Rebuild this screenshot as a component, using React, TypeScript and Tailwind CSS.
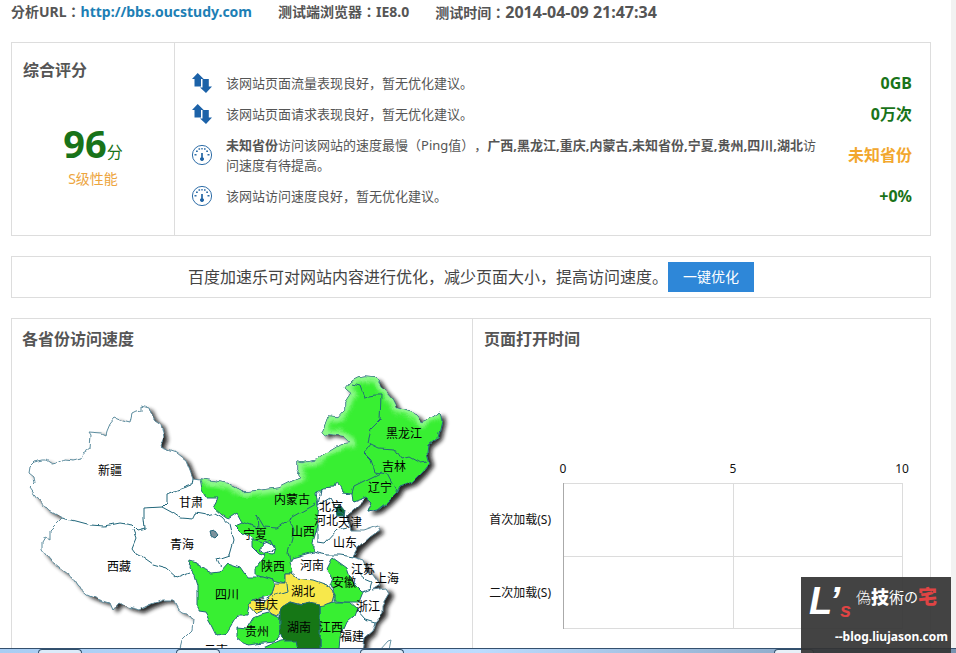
import React from "react";

const regions = {
  land: "30,488 35,483 34,476 29,472 30,466 34,462 43,460 46,460 52,464 57,463 64,459 73,460 82,458 84,453 90,449 91,435 89,432 102,433 106,435 107,431 110,424 115,418 122,421 130,423 132,414 136,412 142,411 142,406 149,408 151,414 155,420 161,424 164,437 160,447 168,450 177,453 186,460 190,470 193,478 200,479 215,481 230,484 243,492 263,490 278,488 288,483 302,477 297,470 297,462 302,463 317,460 327,452 340,444 350,443 342,435 330,433 325,436 322,433 328,417 338,418 345,410 345,402 351,393 345,388 350,382 358,378 365,377 377,378 383,388 392,398 397,408 407,411 417,415 422,422 433,417 440,412 442,420 438,437 428,445 427,453 430,463 423,472 413,482 400,487 397,493 387,503 378,510 368,512 372,502 367,497 353,510 346,515 350,523 352,530 363,530 377,525 380,530 370,537 358,548 353,557 363,560 367,570 373,575 380,585 372,590 387,588 390,593 383,605 383,613 375,622 372,632 365,638 362,660 180,660 180,648 182,640 192,630 193,620 188,613 182,612 177,608 173,600 163,600 150,605 140,610 128,607 120,602 113,610 110,603 100,600 88,595 77,585 72,577 60,568 50,560 42,550 42,542 45,537 50,540 50,530 62,518 48,510 37,498",
  north: "200,479 215,481 230,484 243,492 263,490 278,488 288,483 302,477 297,470 297,462 302,463 317,460 327,452 340,444 350,443 342,435 330,433 325,436 322,433 328,417 338,418 345,410 345,402 351,393 345,388 350,382 358,378 365,377 377,378 383,388 392,398 397,408 407,411 417,415 422,422 433,417 440,412 442,420 438,437 428,445 427,453 430,463 423,472 413,482 400,487 397,493 387,503 378,510 368,512 372,502 367,497 353,502 352,493 342,492 337,482 335,487 322,488 316,493 318,505 317,515 318,525 313,542 313,552 292,558 290,562 293,573 285,573 285,583 273,580 255,575 255,568 265,555 258,553 252,547 252,538 243,533 235,525 242,522 237,513 228,519 222,515 213,507 218,498 207,498 202,490",
  sichuan: "190,560 197,562 200,568 212,573 220,572 228,563 240,567 247,577 263,577 273,580 275,583 272,595 252,600 250,607 248,615 238,615 235,620 227,633 217,635 212,625 205,613 198,612 198,585 195,575 189,567",
  hubei: "285,573 292,573 298,578 313,580 327,585 335,595 333,602 325,605 310,607 290,602 282,607 278,615 273,613 267,608 255,613 250,607 252,600 263,602 272,595 275,583 285,583",
  hunan: "280,610 282,607 290,602 300,605 310,603 320,605 320,648 297,650 295,640 283,640 280,632",
  guizhou: "270,612 280,617 280,633 273,642 247,645 237,637 237,627 247,628 253,618 262,614",
  guangxi: "255,660 262,648 280,640 297,638 297,660",
  jiangxi: "320,605 335,602 350,602 357,608 354,616 347,622 340,638 338,660 320,660",
  anhui: "333,558 347,568 350,577 355,585 362,592 358,602 345,602 335,601 335,595 330,585 333,577 327,570",
};

const borders = [
  "62,518 75,521 90,525 105,526 120,523 132,525 137,530 145,528 144,518 144,508 162,507 167,502 167,495 178,490 192,485 193,478",
  "133,530 136,538 132,548 137,555 143,558 153,565 167,569 177,578 190,573",
  "162,507 173,513 180,518 193,519 196,513 207,515 215,513 222,517 229,525 233,541 229,555 217,559 221,567",
  "352,384 360,386 364,397 376,395 381,395 380,420 370,430 367,442 379,448 395,449 402,459 410,457 421,463 427,462",
  "371,444 364,453 371,460 375,472 387,474 397,493",
  "382,472 370,478 354,486 352,493",
  "242,522 258,528 257,515 264,527 277,528 288,520 300,513 316,504",
  "290,520 294,530 288,552 290,560",
  "250,540 263,543 270,540 275,549 264,554",
  "287,583 288,592 272,597",
  "318,525 318,542 325,543 337,530 348,528",
  "313,552 327,555 340,555 354,557",
  "321,488 318,505 330,498 338,512 345,517",
  "355,570 365,579 372,582 370,589 362,592",
  "357,610 365,619 375,622",
];

const ridge =
  "200,479 230,484 243,492 263,490 278,488 288,483 302,477 297,470 297,462 317,460 327,452 340,444 352,443 342,435 322,433 328,417 338,418 345,410 351,393 345,388 350,382 365,377 377,378 383,388 397,408 417,415 422,422 440,412";

const labels: [string, number, number][] = [
  ["新疆", 98, 475], ["甘肃", 179, 507], ["青海", 170, 549], ["西藏", 107, 571],
  ["黑龙江", 386, 438], ["吉林", 382, 471], ["辽宁", 368, 492], ["内蒙古", 274, 504],
  ["北京", 319, 511], ["河北", 314, 525], ["天津", 338, 527], ["宁夏", 243, 539],
  ["山西", 291, 536], ["山东", 333, 547], ["陕西", 261, 571], ["河南", 300, 570],
  ["江苏", 351, 574], ["上海", 375, 583], ["安徽", 332, 587], ["四川", 215, 599],
  ["湖北", 291, 596], ["重庆", 254, 609], ["浙江", 356, 611], ["贵州", 245, 636],
  ["湖南", 287, 632], ["江西", 319, 632], ["福建", 340, 641], ["云南", 204, 655],
];

function ChinaMap() {
  return (
    <svg viewBox="12 360 460 293" className="block w-full" role="img" aria-label="各省份访问速度">
      <defs>
        <filter id="rough" x="-5%" y="-5%" width="110%" height="110%">
          <feTurbulence type="fractalNoise" baseFrequency="0.11" numOctaves="1" seed="4" />
          <feDisplacementMap in="SourceGraphic" scale="6" xChannelSelector="R" yChannelSelector="G" />
        </filter>
        <filter id="shade" x="-5%" y="-5%" width="110%" height="110%">
          <feGaussianBlur stdDeviation="2" />
        </filter>
        <clipPath id="northClip">
          <polygon points={regions.north} />
        </clipPath>
      </defs>
      <polygon points={regions.land} fill="#111" opacity="0.9" filter="url(#shade)" transform="translate(4 3)" />
      <g filter="url(#rough)" stroke="#23687c" strokeWidth="1" strokeLinejoin="round">
        <polygon points={regions.land} fill="#fff" stroke="#5c8c9e" />
        <polygon points={regions.north} fill="#38ef32" />
        <g clipPath="url(#northClip)">
          <polyline points={ridge} fill="none" stroke="#b4ffb0" strokeWidth="9" opacity="0.7" filter="url(#shade)" />
        </g>
        <polygon points={regions.sichuan} fill="#38ef32" />
        <polygon points={regions.guizhou} fill="#38ef32" />
        <polygon points={regions.guangxi} fill="#38ef32" />
        <polygon points={regions.jiangxi} fill="#38ef32" />
        <polygon points={regions.anhui} fill="#38ef32" />
        <polygon points={regions.hubei} fill="#f7e84b" />
        <polygon points={regions.hunan} fill="#167718" />
        <polygon points="264,540 270,543 275,547 273,554 264,553 259,550 263,547" fill="#fff" />
        <polygon points="336,508 340,505 344,510 343,517 337,517" fill="#0b6b35" />
        <polygon points="210,532 215,531 218,535 215,538 211,536" fill="#7b929c" />
        {borders.map((points) => (
          <polyline key={points} points={points} fill="none" />
        ))}
      </g>
      <path d="M380 650l8-9 3-1-2 10" fill="#fff" stroke="#6b98a8" />
      <g className="text-[12px]" fill="#000">
        {labels.map(([name, x, y]) => (
          <text key={name} x={x} y={y}>{name}</text>
        ))}
      </g>
    </svg>
  );
}

function LoadChart() {
  return (
    <svg viewBox="473 360 457 293" className="block w-full text-[12px]" role="img" aria-label="页面打开时间">
      <g shapeRendering="crispEdges" stroke="#dcdcdc" fill="none">
        <path d="M563 483.5H902M563 556.5H902M563 628.5H902M733.5 483V629M902.5 483V629" />
        <path d="M563.5 483V629" stroke="#aaa" />
      </g>
      <g fill="#111">
        <g textAnchor="middle">
          <text x="563" y="473">0</text>
          <text x="733" y="473">5</text>
          <text x="902" y="473">10</text>
        </g>
        <g textAnchor="end">
          <text x="551" y="524">首次加载(S)</text>
          <text x="551" y="597">二次加载(S)</text>
        </g>
      </g>
    </svg>
  );
}

function ArrowsIcon() {
  return (
    <svg viewBox="0 0 20 20" className="size-5 shrink-0 overflow-visible" fill="#1c62a8" aria-hidden="true">
      <path d="M0 6 5.700 0l6 6H9v7.500H2.500V6z" />
      <path d="M10.500 6h6.300v7.500H20L14 20l-6-5.500h2.500z" />
    </svg>
  );
}

function GaugeIcon() {
  return (
    <svg viewBox="0 0 20 20" className="size-5 shrink-0 overflow-visible" fill="none" stroke="#2f6ea8" aria-hidden="true">
      <circle cx="10" cy="10" r="9.600" />
      <path d="M10 8v7" strokeWidth="1.800" />
      <circle cx="10" cy="14" r="1.600" fill="#1c62a8" />
      <g fill="#2f6ea8" stroke="none">
        <path d="M2.500 9h2v1.500h-2zM15.500 9h2v1.500h-2zM4 5.500h1.800v1.500H4zM14.200 5.500H16V7h-1.800zM6.500 3.200h1.600v1.500H6.500zM12 3.200h1.600v1.500H12zM9.300 3h1.400v1.500H9.300z" />
      </g>
    </svg>
  );
}

type TipProps = { icon: React.ReactNode; value: string; tone: string; children: React.ReactNode };

function Tip({ icon, value, tone, children }: TipProps) {
  return (
    <li className="flex items-center">
      {icon}
      <p className="ml-[14px] w-[600px] text-[13px] leading-5">{children}</p>
      <strong className={`ml-auto text-base leading-5 font-bold whitespace-nowrap ${tone}`}>{value}</strong>
    </li>
  );
}

export default function App() {
  return (
    <div className="relative flex h-screen overflow-hidden bg-white font-['Noto_Sans','Noto_Sans_CJK_SC',sans-serif] text-[#555] [text-spacing-trim:space-all]">
      <main className="min-w-0 flex-1 pr-5 pl-[11px]">
        <header className="flex h-[42px] gap-[26px] font-['Noto_Sans','Noto_Sans_CJK_TC',sans-serif] text-sm leading-6 font-bold whitespace-nowrap">
          <p>
            分析URL：<a href="http://bbs.oucstudy.com" className="text-[#1d7fb5]">http://bbs.oucstudy.com</a>
          </p>
          <p>测试端浏览器：IE8.0</p>
          <p>测试时间：<time className="text-base leading-6">2014-04-09 21:47:34</time></p>
        </header>

        <section className="flex h-[194px] border border-[#ddd]">
          <div className="w-[163px] border-r border-[#ddd]">
            <h2 className="px-[11px] pt-[15px] text-base leading-6 font-bold">综合评分</h2>
            <p className="pt-[44px] text-center leading-[34px] text-[#197319]">
              <span className="text-[38px] font-bold">96</span>
              <span className="text-base">分</span>
            </p>
            <p className="text-center text-sm leading-5 text-[#eda53e]">S级性能</p>
          </div>
          <ul className="flex flex-1 flex-col gap-[11px] pt-[30px] pr-[18px] pl-[17px]">
            <Tip icon={<ArrowsIcon />} value="0GB" tone="text-[#197319]">该网站页面流量表现良好，暂无优化建议。</Tip>
            <Tip icon={<ArrowsIcon />} value="0万次" tone="text-[#197319]">该网站页面请求表现良好，暂无优化建议。</Tip>
            <Tip icon={<GaugeIcon />} value="未知省份" tone="text-[#f2a72e]">
              <b>未知省份</b>访问该网站的速度最慢（Ping值），<b>广西,黑龙江,重庆,内蒙古,未知省份,宁夏,贵州,四川,湖北</b>访问速度有待提高。
            </Tip>
            <Tip icon={<GaugeIcon />} value="+0%" tone="text-[#197319]">该网站访问速度良好，暂无优化建议。</Tip>
          </ul>
        </section>

        <section className="mt-5 flex h-[42px] items-center justify-center border border-[#ddd] text-base text-[#444]">
          <p>百度加速乐可对网站内容进行优化，减少页面大小，提高访问速度。</p>
          <button type="button" className="h-[30px] bg-[#2e87d8] px-[15px] text-sm text-white">一键优化</button>
        </section>

        <div className="mt-5 grid grid-cols-[461fr_457fr] border border-[#ddd]">
          <section className="border-r border-[#ddd]">
            <h2 className="px-[10px] text-base leading-[41px] font-bold">各省份访问速度</h2>
            <ChinaMap />
          </section>
          <section>
            <h2 className="px-[11px] text-base leading-[41px] font-bold">页面打开时间</h2>
            <LoadChart />
          </section>
        </div>
      </main>

      <div className="w-[5px] bg-[#f2f2f2]" />

      <div className="absolute inset-x-0 bottom-0 flex h-[5px] border-t border-[#34506e] bg-linear-to-r from-[#a9cdf3] via-[#bcdcff] to-[#7893b0]">
        <span className="ml-[38px] w-[44px] rounded-t-sm border border-b-0 border-[#31506c] bg-[#dcebfa]" />
        <span className="ml-[94px] w-[44px] rounded-t-sm border border-b-0 border-[#31506c] bg-[#dcebfa]" />
        <span className="ml-[140px] w-[44px] rounded-t-sm border border-b-0 border-[#31506c] bg-[#dcebfa]" />
        <span className="ml-[370px] w-[40px] rounded-t-sm border border-b-0 border-[#31506c] bg-[#e8f0f8]" />
      </div>

      <div className="absolute right-[5px] bottom-0 h-[76px] w-[150px] bg-[#333]/92 text-white">
        <div className="flex h-[48px] items-center pl-2 whitespace-nowrap">
          <span className="font-['Liberation_Sans',sans-serif] text-[38px] leading-[48px] font-bold italic">L’</span>
          <span className="self-end font-['Liberation_Sans',sans-serif] text-[20px] leading-[30px] font-bold text-[#e04444] italic">s</span>
          <span className="ml-auto flex items-center pr-[14px] pb-2 text-[15px] leading-5">
            <span className="font-light">偽</span>
            <b className="text-[18px] font-black">技</b>
            <span>術</span>
            <span className="text-[14px]">の</span>
            <b className="text-[19px] font-black text-[#e04444]">宅</b>
          </span>
        </div>
        <p className="pr-[3px] text-right text-[12px] leading-6 font-bold">--blog.liujason.com</p>
      </div>
    </div>
  );
}
